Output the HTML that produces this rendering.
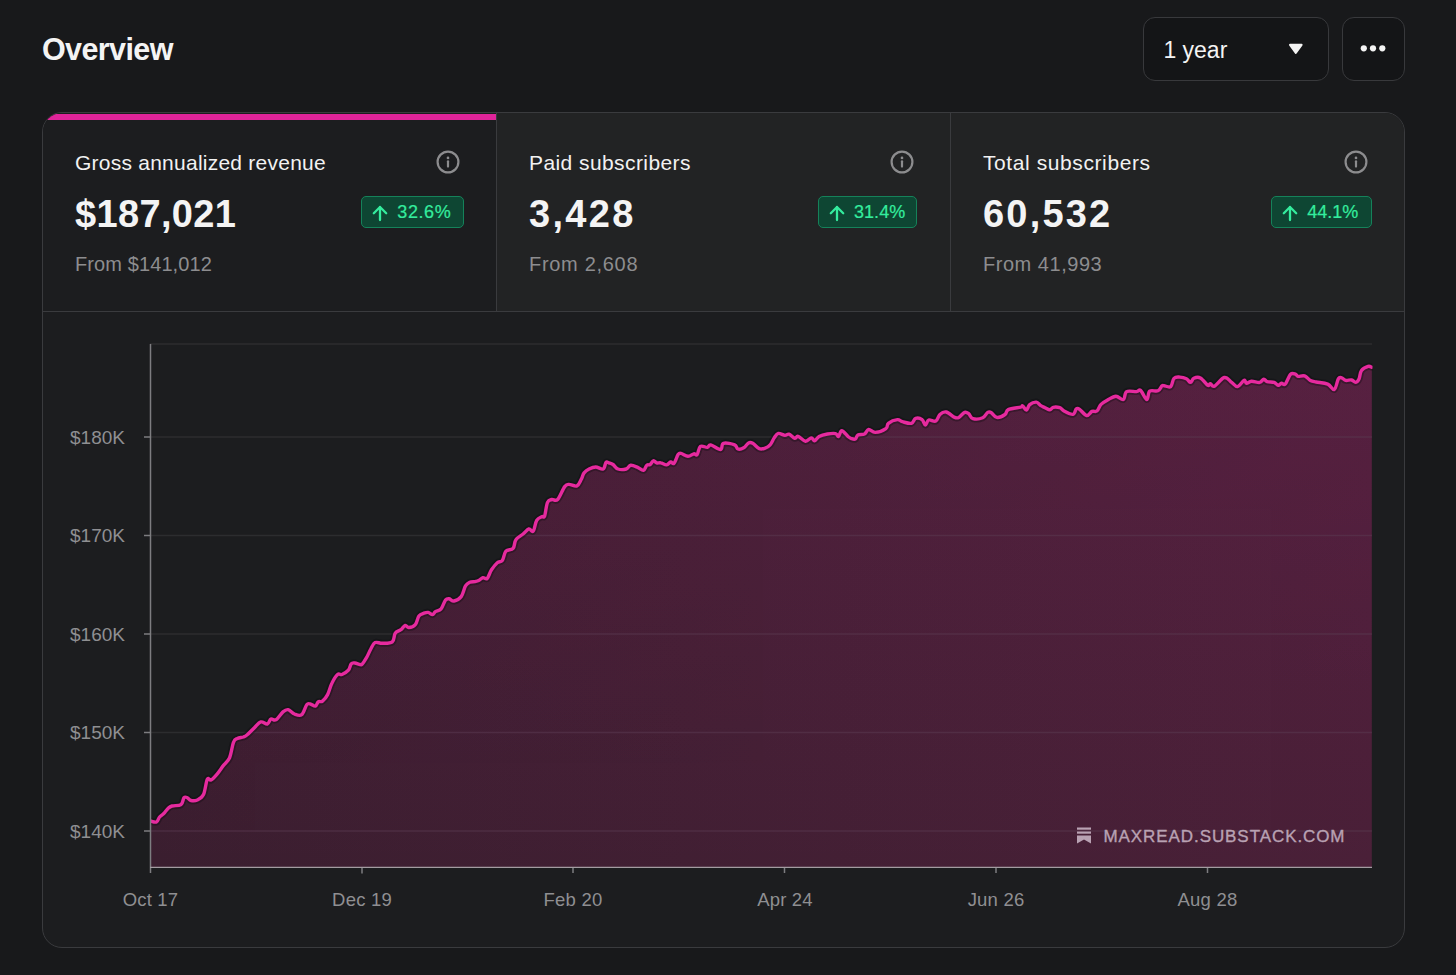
<!DOCTYPE html>
<html><head><meta charset="utf-8">
<style>
*{box-sizing:border-box;margin:0;padding:0}
html,body{width:1456px;height:975px;overflow:hidden;background:#18191b}
body{font-family:"Liberation Sans",sans-serif;color:#f2f2f2;position:relative}
.abs{position:absolute}
.title{left:42px;top:31px;font-size:30.5px;font-weight:700;color:#f4f4f4;line-height:36px;white-space:nowrap;letter-spacing:-0.6px}
.btn{border:1.5px solid #38393c;border-radius:12px;background:#141517}
.dd{left:1143px;top:17px;width:186px;height:64px}
.dd .lbl{position:absolute;left:19.4px;top:18px;font-size:23px;line-height:28px;color:#f4f4f4}
.more{left:1342px;top:17px;width:63px;height:64px}
.card{left:42px;top:112px;width:1363px;height:836px;border:1px solid #3a3b3e;border-radius:20px;background:#1c1d1f;overflow:hidden}
.tile{position:absolute;top:0;height:199px;background:#222324;border-bottom:1px solid #3a3b3e}
.t1{left:0;width:454px;background:#1c1d1f;border-right:1px solid #3a3b3e}
.t2{left:454px;width:454px;border-right:1px solid #3a3b3e}
.t3{left:908px;width:453px}
.bar{position:absolute;left:0;top:1px;width:453px;height:6px;background:#e0249a}
.tt{position:absolute;left:32px;top:38px;font-size:21px;line-height:24px;color:#f2f2f2;white-space:nowrap;letter-spacing:0.2px}
.num{position:absolute;left:32px;top:78.5px;font-size:38px;font-weight:700;line-height:44px;color:#f4f4f4;white-space:nowrap;letter-spacing:0.3px}
.from{position:absolute;left:32px;top:139px;font-size:20px;line-height:24px;color:#8d8d8f;white-space:nowrap;letter-spacing:0.1px}
.badge{position:absolute;top:83.3px;height:31.8px;border:1.5px solid #15825a;background:#0e4633;border-radius:5px;color:#34ec9e;font-size:18px;line-height:29px;white-space:nowrap}
.badge svg{position:absolute;left:9px;top:6.5px}
.badge span{position:absolute;left:35px;top:1px;-webkit-text-stroke:0.2px #34ec9e}
.info{position:absolute;top:36.5px}
</style></head><body>
<div class="abs title">Overview</div>
<div class="abs btn dd"><span class="lbl">1 year</span>
<svg class="abs" style="left:144px;top:24.5px" width="16" height="14" viewBox="0 0 16 14"><path d="M2 1.8 L13.6 1.8 L7.8 10 Z" fill="#f4f4f4" stroke="#f4f4f4" stroke-width="2" stroke-linejoin="round"/></svg>
</div>
<div class="abs btn more">
<svg class="abs" style="left:17px;top:26px" width="28" height="10" viewBox="0 0 28 10"><circle cx="3.8" cy="4.3" r="3.1" fill="#f4f4f4"/><circle cx="13" cy="4.3" r="3.1" fill="#f4f4f4"/><circle cx="22.3" cy="4.3" r="3.1" fill="#f4f4f4"/></svg>
</div>
<div class="abs card">
  <div class="tile t1"><div class="bar"></div>
    <div class="tt" style="letter-spacing:0.24px">Gross annualized revenue</div>
    <svg class="info" style="left:393px" width="24" height="24" viewBox="0 0 24 24"><circle cx="12" cy="12" r="10.4" fill="none" stroke="#8c8c8e" stroke-width="2.2"/><line x1="12" y1="11.3" x2="12" y2="16.6" stroke="#8c8c8e" stroke-width="2.2" stroke-linecap="round"/><circle cx="12" cy="7.9" r="1.35" fill="#8c8c8e"/></svg>
    <div class="num" style="letter-spacing:0.35px">$187,021</div>
    <div class="badge" style="left:318.3px;width:102.3px"><svg width="18" height="18" viewBox="0 0 18 18"><path d="M9 16 V3 M2.8 9.2 L9 3 L15.2 9.2" fill="none" stroke="#34ec9e" stroke-width="2.3" stroke-linecap="round" stroke-linejoin="round"/></svg><span style="letter-spacing:0.6px">32.6%</span></div>
    <div class="from" style="letter-spacing:0.1px">From $141,012</div>
  </div>
  <div class="tile t2">
    <div class="tt" style="letter-spacing:0.42px">Paid subscribers</div>
    <svg class="info" style="left:393px" width="24" height="24" viewBox="0 0 24 24"><circle cx="12" cy="12" r="10.4" fill="none" stroke="#8c8c8e" stroke-width="2.2"/><line x1="12" y1="11.3" x2="12" y2="16.6" stroke="#8c8c8e" stroke-width="2.2" stroke-linecap="round"/><circle cx="12" cy="7.9" r="1.35" fill="#8c8c8e"/></svg>
    <div class="num" style="letter-spacing:2.3px">3,428</div>
    <div class="badge" style="left:320.9px;width:99.3px"><svg width="18" height="18" viewBox="0 0 18 18"><path d="M9 16 V3 M2.8 9.2 L9 3 L15.2 9.2" fill="none" stroke="#34ec9e" stroke-width="2.3" stroke-linecap="round" stroke-linejoin="round"/></svg><span style="letter-spacing:0.1px">31.4%</span></div>
    <div class="from" style="letter-spacing:0.7px">From 2,608</div>
  </div>
  <div class="tile t3">
    <div class="tt" style="letter-spacing:0.59px">Total subscribers</div>
    <svg class="info" style="left:393px" width="24" height="24" viewBox="0 0 24 24"><circle cx="12" cy="12" r="10.4" fill="none" stroke="#8c8c8e" stroke-width="2.2"/><line x1="12" y1="11.3" x2="12" y2="16.6" stroke="#8c8c8e" stroke-width="2.2" stroke-linecap="round"/><circle cx="12" cy="7.9" r="1.35" fill="#8c8c8e"/></svg>
    <div class="num" style="letter-spacing:2.2px">60,532</div>
    <div class="badge" style="left:320.3px;width:100.6px"><svg width="18" height="18" viewBox="0 0 18 18"><path d="M9 16 V3 M2.8 9.2 L9 3 L15.2 9.2" fill="none" stroke="#34ec9e" stroke-width="2.3" stroke-linecap="round" stroke-linejoin="round"/></svg><span>44.1%</span></div>
    <div class="from" style="letter-spacing:0.53px">From 41,993</div>
  </div>
</div>
<svg class="abs" style="left:0;top:0" width="1456" height="975" viewBox="0 0 1456 975">
  <defs>
    <linearGradient id="fg" x1="150" y1="0" x2="1372" y2="0" gradientUnits="userSpaceOnUse">
      <stop offset="0" stop-color="#3a1e2f"/>
      <stop offset="1" stop-color="#4a2038"/>
    </linearGradient>
    <linearGradient id="fv" x1="0" y1="360" x2="0" y2="867" gradientUnits="userSpaceOnUse">
      <stop offset="0" stop-color="#e0249a" stop-opacity="0.09"/>
      <stop offset="1" stop-color="#e0249a" stop-opacity="0"/>
    </linearGradient>
  </defs>
  <g stroke="#2c2d2f" stroke-width="1.5">
    <line x1="150" y1="344" x2="1372" y2="344"/>
    <line x1="150" y1="437" x2="1372" y2="437"/>
    <line x1="150" y1="535.5" x2="1372" y2="535.5"/>
    <line x1="150" y1="634" x2="1372" y2="634"/>
    <line x1="150" y1="732.5" x2="1372" y2="732.5"/>
    <line x1="150" y1="831" x2="1372" y2="831"/>
  </g>
  <path d="M150.5 821.0 C151.6 821.2 154.9 822.7 156.5 822.0 C158.1 821.3 158.4 818.4 159.6 817.0 C160.8 815.6 162.0 815.3 163.5 813.8 C165.0 812.3 166.5 809.9 168.0 808.5 C169.5 807.1 169.7 806.7 172.0 806.0 C174.3 805.3 178.9 806.1 181.0 804.6 C183.1 803.1 182.9 798.9 184.0 797.7 C185.1 796.5 186.1 797.2 187.3 797.7 C188.5 798.2 189.2 800.1 191.0 800.5 C192.8 800.9 195.1 801.0 197.3 800.0 C199.5 799.0 201.8 798.2 203.5 794.6 C205.2 791.0 206.0 781.8 207.3 779.2 C208.6 776.6 209.2 780.9 211.0 780.0 C212.8 779.1 215.1 776.4 217.3 773.8 C219.5 771.2 221.3 768.2 223.5 765.4 C225.7 762.6 227.8 761.7 229.6 757.7 C231.3 753.7 232.2 745.7 233.5 742.3 C234.8 738.9 235.6 739.4 237.3 738.5 C239.1 737.6 241.8 737.6 243.5 737.0 C245.2 736.4 245.3 736.4 247.2 734.8 C249.1 733.2 252.0 730.0 254.4 727.7 C256.8 725.4 258.5 722.5 260.8 721.9 C263.1 721.3 265.5 724.5 267.3 724.0 C269.1 723.5 269.4 719.7 270.9 719.0 C272.4 718.3 273.8 721.0 275.9 719.8 C278.0 718.6 280.9 713.7 283.0 711.9 C285.1 710.1 286.1 709.3 288.1 709.7 C290.1 710.1 292.1 713.1 294.5 714.0 C296.9 714.9 299.6 716.3 301.7 714.7 C303.8 713.1 305.2 706.6 306.7 704.7 C308.2 702.8 308.8 703.8 310.3 704.0 C311.8 704.2 314.0 706.5 315.4 706.1 C316.8 705.7 317.0 702.7 318.2 701.8 C319.4 700.9 320.9 702.4 322.5 701.1 C324.1 699.8 326.0 697.7 327.6 694.6 C329.2 691.5 330.1 686.7 331.9 683.2 C333.6 679.7 335.9 676.0 337.6 674.5 C339.4 673.0 340.0 675.3 341.9 674.5 C343.8 673.7 346.8 672.1 348.4 670.2 C350.0 668.3 350.1 665.1 351.2 663.8 C352.3 662.5 353.3 662.9 354.8 663.0 C356.3 663.1 358.7 664.3 360.0 664.5 C361.3 664.7 361.1 665.3 362.2 664.1 C363.3 662.9 365.0 660.3 366.5 657.7 C368.0 655.1 369.3 651.6 370.8 649.0 C372.3 646.4 373.1 643.6 375.1 642.6 C377.1 641.6 379.3 643.4 382.3 643.3 C385.3 643.2 390.0 643.7 392.3 641.9 C394.6 640.1 393.7 635.3 395.2 633.2 C396.7 631.1 399.1 631.1 400.9 629.7 C402.6 628.3 403.8 625.8 405.2 625.4 C406.6 625.0 407.0 627.6 408.8 627.5 C410.6 627.4 413.5 626.6 415.3 624.6 C417.1 622.6 417.4 618.0 418.9 616.0 C420.4 614.0 422.3 613.8 423.9 613.2 C425.5 612.6 426.7 612.2 428.2 612.4 C429.7 612.6 431.2 614.7 432.5 614.6 C433.8 614.5 433.9 612.7 435.4 611.7 C436.9 610.7 439.4 610.8 441.1 608.8 C442.9 606.8 444.0 602.0 445.4 600.2 C446.8 598.5 447.5 598.7 449.0 598.8 C450.5 598.9 451.9 601.4 454.0 601.0 C456.1 600.6 459.2 599.2 461.2 596.6 C463.2 594.0 464.0 588.4 465.5 585.9 C467.0 583.4 468.1 583.1 469.8 582.3 C471.5 581.5 473.5 581.9 475.0 581.6 C476.5 581.3 477.2 581.3 478.6 580.6 C480.0 579.9 481.4 578.1 482.9 577.7 C484.4 577.3 485.7 579.8 487.2 578.4 C488.7 577.0 489.7 572.5 491.5 569.8 C493.3 567.1 495.4 564.3 497.3 562.7 C499.2 561.1 500.8 562.5 502.3 560.5 C503.8 558.5 504.0 553.3 505.9 551.2 C507.8 549.1 511.4 550.3 513.1 548.3 C514.9 546.3 514.1 542.2 515.9 539.7 C517.6 537.2 520.8 535.9 523.1 534.0 C525.4 532.1 527.0 529.4 528.8 528.9 C530.6 528.4 531.8 532.6 533.2 531.1 C534.6 529.6 535.2 522.8 536.7 520.3 C538.2 517.8 540.4 517.5 541.8 516.7 C543.2 515.9 543.6 518.5 544.6 516.0 C545.6 513.5 546.2 505.3 547.5 502.4 C548.8 499.5 550.0 500.0 551.8 499.5 C553.6 499.0 555.3 501.8 557.6 499.5 C559.9 497.2 562.7 489.2 564.7 486.6 C566.7 484.0 566.9 484.5 569.0 484.4 C571.1 484.3 574.8 486.8 576.9 485.9 C579.0 485.0 579.9 481.7 581.2 479.4 C582.5 477.1 582.7 474.7 584.1 472.9 C585.5 471.1 587.1 470.0 589.1 469.0 C591.1 468.0 593.2 467.0 595.7 467.0 C598.2 467.0 601.3 469.8 603.1 469.0 C604.9 468.2 605.0 463.5 606.0 462.4 C607.0 461.3 607.7 462.5 608.9 462.9 C610.1 463.3 611.4 463.4 613.0 464.5 C614.6 465.6 615.7 468.2 618.0 469.0 C620.3 469.8 624.0 469.6 626.2 469.0 C628.4 468.4 628.7 465.6 630.7 465.3 C632.7 465.0 635.5 466.5 637.7 467.4 C639.9 468.3 641.9 470.7 643.5 470.3 C645.1 469.9 645.6 466.3 646.8 465.3 C648.0 464.3 648.9 465.3 650.1 464.5 C651.3 463.7 652.2 461.1 653.4 460.8 C654.6 460.5 655.4 462.5 656.7 462.9 C658.0 463.3 659.1 462.5 660.8 462.9 C662.5 463.2 664.9 465.1 666.6 464.9 C668.3 464.7 669.4 462.3 670.7 462.0 C672.0 461.7 672.7 464.6 674.0 463.3 C675.3 462.0 676.9 456.3 678.1 454.6 C679.3 452.9 679.3 453.1 681.0 453.4 C682.7 453.7 685.8 456.2 688.0 456.3 C690.2 456.4 692.2 454.1 693.8 453.8 C695.4 453.5 695.9 455.9 697.1 454.6 C698.3 453.3 698.6 447.7 700.4 446.4 C702.2 445.1 705.6 447.7 707.4 447.4 C709.2 447.1 708.4 444.5 710.7 444.9 C713.0 445.3 718.4 449.8 720.6 449.5 C722.8 449.2 721.0 444.1 723.5 443.3 C726.0 442.5 732.1 443.9 734.6 444.9 C737.1 445.9 736.3 448.5 737.9 449.0 C739.5 449.5 741.8 448.9 743.7 447.8 C745.6 446.7 747.0 443.7 748.6 442.9 C750.2 442.1 750.9 442.3 752.8 443.3 C754.7 444.3 757.1 447.7 759.3 448.6 C761.5 449.5 763.2 448.8 765.1 448.2 C767.0 447.6 768.5 446.7 770.1 444.9 C771.7 443.1 772.8 439.9 774.2 437.9 C775.6 435.9 776.4 433.8 778.3 433.4 C780.2 433.0 783.0 435.3 784.9 435.4 C786.8 435.5 787.3 433.7 789.0 434.2 C790.7 434.7 793.2 437.9 794.8 438.3 C796.4 438.7 796.2 435.8 798.1 436.3 C800.0 436.8 803.2 440.9 805.5 441.2 C807.8 441.5 809.7 438.0 811.3 437.9 C812.9 437.8 813.2 441.0 814.6 440.8 C816.0 440.6 816.9 437.7 819.1 436.5 C821.3 435.3 824.5 434.5 827.4 434.0 C830.3 433.5 833.7 433.2 835.6 433.6 C837.5 434.0 837.4 437.0 838.5 436.5 C839.6 436.0 840.1 430.7 841.8 430.7 C843.5 430.7 846.3 435.1 848.0 436.5 C849.7 437.9 850.0 438.2 851.3 438.6 C852.6 439.0 854.2 439.6 855.4 439.0 C856.6 438.4 856.3 435.8 857.9 434.9 C859.5 434.0 862.6 434.9 864.5 434.0 C866.4 433.1 866.7 429.8 868.6 429.5 C870.5 429.2 872.2 432.5 875.2 432.4 C878.2 432.3 883.6 430.3 885.9 428.7 C888.2 427.1 886.4 424.9 888.4 423.3 C890.4 421.7 894.9 419.9 897.4 419.6 C899.9 419.3 899.9 421.1 902.4 421.7 C904.9 422.3 909.1 423.9 911.4 423.3 C913.7 422.7 913.7 419.0 915.6 418.4 C917.5 417.8 920.4 418.4 922.1 419.6 C923.8 420.8 924.2 424.9 925.4 425.0 C926.6 425.1 926.9 420.7 928.7 420.0 C930.5 419.3 933.8 422.1 935.8 421.1 C937.8 420.1 938.1 416.1 939.9 414.5 C941.7 412.9 943.5 411.5 946.1 412.0 C948.7 412.5 952.5 416.5 954.7 417.4 C956.9 418.3 957.1 418.3 958.8 417.4 C960.5 416.5 962.9 413.0 964.6 412.4 C966.3 411.8 967.2 412.6 968.7 413.7 C970.2 414.8 970.4 417.9 972.9 418.6 C975.4 419.3 980.1 418.9 982.7 417.8 C985.3 416.7 986.2 413.3 987.7 412.4 C989.2 411.5 989.4 411.5 991.0 412.4 C992.6 413.3 994.3 417.0 996.8 417.4 C999.2 417.8 1003.0 415.9 1005.0 414.5 C1007.0 413.1 1005.6 410.9 1008.3 409.6 C1011.0 408.3 1018.2 407.7 1020.7 407.1 C1023.2 406.5 1021.7 405.4 1022.7 405.9 C1023.7 406.4 1025.2 410.2 1026.4 410.0 C1027.6 409.8 1028.0 406.0 1029.7 404.6 C1031.4 403.2 1034.4 402.0 1036.3 402.1 C1038.2 402.2 1038.9 404.4 1040.4 405.4 C1041.9 406.4 1043.3 406.9 1045.0 407.7 C1046.7 408.5 1048.5 409.9 1049.9 409.8 C1051.3 409.7 1051.5 407.7 1053.2 407.3 C1054.9 406.9 1057.9 407.1 1059.8 407.7 C1061.7 408.3 1061.7 409.8 1064.0 411.0 C1066.3 412.2 1070.8 414.7 1073.0 414.3 C1075.2 413.9 1075.1 409.8 1076.3 408.9 C1077.5 408.0 1077.8 408.1 1079.6 409.3 C1081.4 410.5 1084.4 415.1 1086.6 415.5 C1088.8 415.9 1090.2 412.2 1092.0 411.4 C1093.8 410.6 1095.3 412.2 1096.9 411.0 C1098.5 409.8 1099.1 406.3 1101.0 404.4 C1102.9 402.5 1105.0 401.3 1107.6 399.9 C1110.2 398.5 1113.2 396.3 1115.9 396.2 C1118.6 396.1 1121.4 400.3 1123.3 399.5 C1125.2 398.7 1124.3 393.0 1126.6 391.6 C1128.9 390.2 1134.0 391.8 1136.5 391.6 C1139.0 391.4 1138.8 389.0 1140.6 390.4 C1142.4 391.8 1145.2 399.4 1146.8 399.5 C1148.4 399.6 1147.8 392.7 1149.7 391.2 C1151.6 389.7 1155.7 391.7 1157.9 390.8 C1160.1 389.9 1160.9 386.8 1162.0 385.9 C1163.1 385.0 1162.6 385.6 1164.1 385.7 C1165.6 385.8 1169.0 387.9 1170.7 386.6 C1172.4 385.3 1172.4 380.0 1174.0 378.3 C1175.6 376.6 1177.6 377.0 1179.8 377.1 C1182.0 377.2 1184.5 377.8 1186.4 378.7 C1188.3 379.6 1189.2 382.5 1190.5 382.4 C1191.8 382.3 1192.1 379.1 1193.8 378.3 C1195.5 377.5 1198.0 376.7 1200.4 377.9 C1202.9 379.1 1206.1 384.3 1207.8 385.3 C1209.5 386.3 1209.1 383.5 1210.3 383.7 C1211.5 383.9 1212.0 387.3 1214.4 386.2 C1216.9 385.1 1221.3 378.2 1224.3 377.5 C1227.3 376.8 1229.4 380.8 1231.7 382.4 C1234.0 384.0 1235.3 387.0 1237.5 386.6 C1239.7 386.2 1242.5 381.0 1244.1 380.4 C1245.7 379.8 1245.2 383.2 1246.5 383.3 C1247.8 383.4 1249.2 381.4 1251.5 381.2 C1253.8 381.0 1257.5 382.8 1259.7 382.4 C1261.9 382.0 1262.5 379.2 1263.8 379.1 C1265.1 379.0 1265.3 381.0 1267.1 381.6 C1268.9 382.2 1272.2 381.8 1274.1 382.4 C1276.0 383.0 1276.9 385.1 1278.2 385.3 C1279.5 385.5 1280.3 383.5 1281.5 383.3 C1282.7 383.1 1283.6 385.7 1285.2 384.1 C1286.8 382.5 1288.8 375.9 1290.6 374.2 C1292.4 372.5 1294.2 373.8 1295.5 374.2 C1296.8 374.6 1296.4 376.0 1298.0 376.3 C1299.6 376.6 1302.4 375.2 1304.6 375.9 C1306.8 376.6 1308.4 379.3 1310.4 380.4 C1312.4 381.5 1313.2 381.4 1316.2 382.0 C1319.2 382.6 1324.5 382.8 1327.7 384.1 C1330.9 385.4 1332.4 390.4 1334.3 389.5 C1336.2 388.6 1337.1 380.7 1338.4 378.7 C1339.7 376.7 1340.4 377.6 1341.7 377.9 C1343.0 378.2 1344.1 380.0 1345.8 380.4 C1347.5 380.8 1349.9 379.6 1351.6 380.0 C1353.3 380.4 1354.4 382.6 1355.7 382.4 C1357.0 382.2 1358.0 381.2 1359.0 379.1 C1360.0 377.0 1359.9 372.7 1361.5 370.5 C1363.1 368.3 1366.3 367.0 1368.1 366.4 C1369.9 365.8 1371.2 367.1 1371.8 367.2 L1371.8 867 L150.5 867 Z" fill="url(#fg)"/>
  <path d="M150.5 821.0 C151.6 821.2 154.9 822.7 156.5 822.0 C158.1 821.3 158.4 818.4 159.6 817.0 C160.8 815.6 162.0 815.3 163.5 813.8 C165.0 812.3 166.5 809.9 168.0 808.5 C169.5 807.1 169.7 806.7 172.0 806.0 C174.3 805.3 178.9 806.1 181.0 804.6 C183.1 803.1 182.9 798.9 184.0 797.7 C185.1 796.5 186.1 797.2 187.3 797.7 C188.5 798.2 189.2 800.1 191.0 800.5 C192.8 800.9 195.1 801.0 197.3 800.0 C199.5 799.0 201.8 798.2 203.5 794.6 C205.2 791.0 206.0 781.8 207.3 779.2 C208.6 776.6 209.2 780.9 211.0 780.0 C212.8 779.1 215.1 776.4 217.3 773.8 C219.5 771.2 221.3 768.2 223.5 765.4 C225.7 762.6 227.8 761.7 229.6 757.7 C231.3 753.7 232.2 745.7 233.5 742.3 C234.8 738.9 235.6 739.4 237.3 738.5 C239.1 737.6 241.8 737.6 243.5 737.0 C245.2 736.4 245.3 736.4 247.2 734.8 C249.1 733.2 252.0 730.0 254.4 727.7 C256.8 725.4 258.5 722.5 260.8 721.9 C263.1 721.3 265.5 724.5 267.3 724.0 C269.1 723.5 269.4 719.7 270.9 719.0 C272.4 718.3 273.8 721.0 275.9 719.8 C278.0 718.6 280.9 713.7 283.0 711.9 C285.1 710.1 286.1 709.3 288.1 709.7 C290.1 710.1 292.1 713.1 294.5 714.0 C296.9 714.9 299.6 716.3 301.7 714.7 C303.8 713.1 305.2 706.6 306.7 704.7 C308.2 702.8 308.8 703.8 310.3 704.0 C311.8 704.2 314.0 706.5 315.4 706.1 C316.8 705.7 317.0 702.7 318.2 701.8 C319.4 700.9 320.9 702.4 322.5 701.1 C324.1 699.8 326.0 697.7 327.6 694.6 C329.2 691.5 330.1 686.7 331.9 683.2 C333.6 679.7 335.9 676.0 337.6 674.5 C339.4 673.0 340.0 675.3 341.9 674.5 C343.8 673.7 346.8 672.1 348.4 670.2 C350.0 668.3 350.1 665.1 351.2 663.8 C352.3 662.5 353.3 662.9 354.8 663.0 C356.3 663.1 358.7 664.3 360.0 664.5 C361.3 664.7 361.1 665.3 362.2 664.1 C363.3 662.9 365.0 660.3 366.5 657.7 C368.0 655.1 369.3 651.6 370.8 649.0 C372.3 646.4 373.1 643.6 375.1 642.6 C377.1 641.6 379.3 643.4 382.3 643.3 C385.3 643.2 390.0 643.7 392.3 641.9 C394.6 640.1 393.7 635.3 395.2 633.2 C396.7 631.1 399.1 631.1 400.9 629.7 C402.6 628.3 403.8 625.8 405.2 625.4 C406.6 625.0 407.0 627.6 408.8 627.5 C410.6 627.4 413.5 626.6 415.3 624.6 C417.1 622.6 417.4 618.0 418.9 616.0 C420.4 614.0 422.3 613.8 423.9 613.2 C425.5 612.6 426.7 612.2 428.2 612.4 C429.7 612.6 431.2 614.7 432.5 614.6 C433.8 614.5 433.9 612.7 435.4 611.7 C436.9 610.7 439.4 610.8 441.1 608.8 C442.9 606.8 444.0 602.0 445.4 600.2 C446.8 598.5 447.5 598.7 449.0 598.8 C450.5 598.9 451.9 601.4 454.0 601.0 C456.1 600.6 459.2 599.2 461.2 596.6 C463.2 594.0 464.0 588.4 465.5 585.9 C467.0 583.4 468.1 583.1 469.8 582.3 C471.5 581.5 473.5 581.9 475.0 581.6 C476.5 581.3 477.2 581.3 478.6 580.6 C480.0 579.9 481.4 578.1 482.9 577.7 C484.4 577.3 485.7 579.8 487.2 578.4 C488.7 577.0 489.7 572.5 491.5 569.8 C493.3 567.1 495.4 564.3 497.3 562.7 C499.2 561.1 500.8 562.5 502.3 560.5 C503.8 558.5 504.0 553.3 505.9 551.2 C507.8 549.1 511.4 550.3 513.1 548.3 C514.9 546.3 514.1 542.2 515.9 539.7 C517.6 537.2 520.8 535.9 523.1 534.0 C525.4 532.1 527.0 529.4 528.8 528.9 C530.6 528.4 531.8 532.6 533.2 531.1 C534.6 529.6 535.2 522.8 536.7 520.3 C538.2 517.8 540.4 517.5 541.8 516.7 C543.2 515.9 543.6 518.5 544.6 516.0 C545.6 513.5 546.2 505.3 547.5 502.4 C548.8 499.5 550.0 500.0 551.8 499.5 C553.6 499.0 555.3 501.8 557.6 499.5 C559.9 497.2 562.7 489.2 564.7 486.6 C566.7 484.0 566.9 484.5 569.0 484.4 C571.1 484.3 574.8 486.8 576.9 485.9 C579.0 485.0 579.9 481.7 581.2 479.4 C582.5 477.1 582.7 474.7 584.1 472.9 C585.5 471.1 587.1 470.0 589.1 469.0 C591.1 468.0 593.2 467.0 595.7 467.0 C598.2 467.0 601.3 469.8 603.1 469.0 C604.9 468.2 605.0 463.5 606.0 462.4 C607.0 461.3 607.7 462.5 608.9 462.9 C610.1 463.3 611.4 463.4 613.0 464.5 C614.6 465.6 615.7 468.2 618.0 469.0 C620.3 469.8 624.0 469.6 626.2 469.0 C628.4 468.4 628.7 465.6 630.7 465.3 C632.7 465.0 635.5 466.5 637.7 467.4 C639.9 468.3 641.9 470.7 643.5 470.3 C645.1 469.9 645.6 466.3 646.8 465.3 C648.0 464.3 648.9 465.3 650.1 464.5 C651.3 463.7 652.2 461.1 653.4 460.8 C654.6 460.5 655.4 462.5 656.7 462.9 C658.0 463.3 659.1 462.5 660.8 462.9 C662.5 463.2 664.9 465.1 666.6 464.9 C668.3 464.7 669.4 462.3 670.7 462.0 C672.0 461.7 672.7 464.6 674.0 463.3 C675.3 462.0 676.9 456.3 678.1 454.6 C679.3 452.9 679.3 453.1 681.0 453.4 C682.7 453.7 685.8 456.2 688.0 456.3 C690.2 456.4 692.2 454.1 693.8 453.8 C695.4 453.5 695.9 455.9 697.1 454.6 C698.3 453.3 698.6 447.7 700.4 446.4 C702.2 445.1 705.6 447.7 707.4 447.4 C709.2 447.1 708.4 444.5 710.7 444.9 C713.0 445.3 718.4 449.8 720.6 449.5 C722.8 449.2 721.0 444.1 723.5 443.3 C726.0 442.5 732.1 443.9 734.6 444.9 C737.1 445.9 736.3 448.5 737.9 449.0 C739.5 449.5 741.8 448.9 743.7 447.8 C745.6 446.7 747.0 443.7 748.6 442.9 C750.2 442.1 750.9 442.3 752.8 443.3 C754.7 444.3 757.1 447.7 759.3 448.6 C761.5 449.5 763.2 448.8 765.1 448.2 C767.0 447.6 768.5 446.7 770.1 444.9 C771.7 443.1 772.8 439.9 774.2 437.9 C775.6 435.9 776.4 433.8 778.3 433.4 C780.2 433.0 783.0 435.3 784.9 435.4 C786.8 435.5 787.3 433.7 789.0 434.2 C790.7 434.7 793.2 437.9 794.8 438.3 C796.4 438.7 796.2 435.8 798.1 436.3 C800.0 436.8 803.2 440.9 805.5 441.2 C807.8 441.5 809.7 438.0 811.3 437.9 C812.9 437.8 813.2 441.0 814.6 440.8 C816.0 440.6 816.9 437.7 819.1 436.5 C821.3 435.3 824.5 434.5 827.4 434.0 C830.3 433.5 833.7 433.2 835.6 433.6 C837.5 434.0 837.4 437.0 838.5 436.5 C839.6 436.0 840.1 430.7 841.8 430.7 C843.5 430.7 846.3 435.1 848.0 436.5 C849.7 437.9 850.0 438.2 851.3 438.6 C852.6 439.0 854.2 439.6 855.4 439.0 C856.6 438.4 856.3 435.8 857.9 434.9 C859.5 434.0 862.6 434.9 864.5 434.0 C866.4 433.1 866.7 429.8 868.6 429.5 C870.5 429.2 872.2 432.5 875.2 432.4 C878.2 432.3 883.6 430.3 885.9 428.7 C888.2 427.1 886.4 424.9 888.4 423.3 C890.4 421.7 894.9 419.9 897.4 419.6 C899.9 419.3 899.9 421.1 902.4 421.7 C904.9 422.3 909.1 423.9 911.4 423.3 C913.7 422.7 913.7 419.0 915.6 418.4 C917.5 417.8 920.4 418.4 922.1 419.6 C923.8 420.8 924.2 424.9 925.4 425.0 C926.6 425.1 926.9 420.7 928.7 420.0 C930.5 419.3 933.8 422.1 935.8 421.1 C937.8 420.1 938.1 416.1 939.9 414.5 C941.7 412.9 943.5 411.5 946.1 412.0 C948.7 412.5 952.5 416.5 954.7 417.4 C956.9 418.3 957.1 418.3 958.8 417.4 C960.5 416.5 962.9 413.0 964.6 412.4 C966.3 411.8 967.2 412.6 968.7 413.7 C970.2 414.8 970.4 417.9 972.9 418.6 C975.4 419.3 980.1 418.9 982.7 417.8 C985.3 416.7 986.2 413.3 987.7 412.4 C989.2 411.5 989.4 411.5 991.0 412.4 C992.6 413.3 994.3 417.0 996.8 417.4 C999.2 417.8 1003.0 415.9 1005.0 414.5 C1007.0 413.1 1005.6 410.9 1008.3 409.6 C1011.0 408.3 1018.2 407.7 1020.7 407.1 C1023.2 406.5 1021.7 405.4 1022.7 405.9 C1023.7 406.4 1025.2 410.2 1026.4 410.0 C1027.6 409.8 1028.0 406.0 1029.7 404.6 C1031.4 403.2 1034.4 402.0 1036.3 402.1 C1038.2 402.2 1038.9 404.4 1040.4 405.4 C1041.9 406.4 1043.3 406.9 1045.0 407.7 C1046.7 408.5 1048.5 409.9 1049.9 409.8 C1051.3 409.7 1051.5 407.7 1053.2 407.3 C1054.9 406.9 1057.9 407.1 1059.8 407.7 C1061.7 408.3 1061.7 409.8 1064.0 411.0 C1066.3 412.2 1070.8 414.7 1073.0 414.3 C1075.2 413.9 1075.1 409.8 1076.3 408.9 C1077.5 408.0 1077.8 408.1 1079.6 409.3 C1081.4 410.5 1084.4 415.1 1086.6 415.5 C1088.8 415.9 1090.2 412.2 1092.0 411.4 C1093.8 410.6 1095.3 412.2 1096.9 411.0 C1098.5 409.8 1099.1 406.3 1101.0 404.4 C1102.9 402.5 1105.0 401.3 1107.6 399.9 C1110.2 398.5 1113.2 396.3 1115.9 396.2 C1118.6 396.1 1121.4 400.3 1123.3 399.5 C1125.2 398.7 1124.3 393.0 1126.6 391.6 C1128.9 390.2 1134.0 391.8 1136.5 391.6 C1139.0 391.4 1138.8 389.0 1140.6 390.4 C1142.4 391.8 1145.2 399.4 1146.8 399.5 C1148.4 399.6 1147.8 392.7 1149.7 391.2 C1151.6 389.7 1155.7 391.7 1157.9 390.8 C1160.1 389.9 1160.9 386.8 1162.0 385.9 C1163.1 385.0 1162.6 385.6 1164.1 385.7 C1165.6 385.8 1169.0 387.9 1170.7 386.6 C1172.4 385.3 1172.4 380.0 1174.0 378.3 C1175.6 376.6 1177.6 377.0 1179.8 377.1 C1182.0 377.2 1184.5 377.8 1186.4 378.7 C1188.3 379.6 1189.2 382.5 1190.5 382.4 C1191.8 382.3 1192.1 379.1 1193.8 378.3 C1195.5 377.5 1198.0 376.7 1200.4 377.9 C1202.9 379.1 1206.1 384.3 1207.8 385.3 C1209.5 386.3 1209.1 383.5 1210.3 383.7 C1211.5 383.9 1212.0 387.3 1214.4 386.2 C1216.9 385.1 1221.3 378.2 1224.3 377.5 C1227.3 376.8 1229.4 380.8 1231.7 382.4 C1234.0 384.0 1235.3 387.0 1237.5 386.6 C1239.7 386.2 1242.5 381.0 1244.1 380.4 C1245.7 379.8 1245.2 383.2 1246.5 383.3 C1247.8 383.4 1249.2 381.4 1251.5 381.2 C1253.8 381.0 1257.5 382.8 1259.7 382.4 C1261.9 382.0 1262.5 379.2 1263.8 379.1 C1265.1 379.0 1265.3 381.0 1267.1 381.6 C1268.9 382.2 1272.2 381.8 1274.1 382.4 C1276.0 383.0 1276.9 385.1 1278.2 385.3 C1279.5 385.5 1280.3 383.5 1281.5 383.3 C1282.7 383.1 1283.6 385.7 1285.2 384.1 C1286.8 382.5 1288.8 375.9 1290.6 374.2 C1292.4 372.5 1294.2 373.8 1295.5 374.2 C1296.8 374.6 1296.4 376.0 1298.0 376.3 C1299.6 376.6 1302.4 375.2 1304.6 375.9 C1306.8 376.6 1308.4 379.3 1310.4 380.4 C1312.4 381.5 1313.2 381.4 1316.2 382.0 C1319.2 382.6 1324.5 382.8 1327.7 384.1 C1330.9 385.4 1332.4 390.4 1334.3 389.5 C1336.2 388.6 1337.1 380.7 1338.4 378.7 C1339.7 376.7 1340.4 377.6 1341.7 377.9 C1343.0 378.2 1344.1 380.0 1345.8 380.4 C1347.5 380.8 1349.9 379.6 1351.6 380.0 C1353.3 380.4 1354.4 382.6 1355.7 382.4 C1357.0 382.2 1358.0 381.2 1359.0 379.1 C1360.0 377.0 1359.9 372.7 1361.5 370.5 C1363.1 368.3 1366.3 367.0 1368.1 366.4 C1369.9 365.8 1371.2 367.1 1371.8 367.2 L1371.8 867 L150.5 867 Z" fill="url(#fv)"/>
  <clipPath id="fc"><path d="M150.5 821.0 C151.6 821.2 154.9 822.7 156.5 822.0 C158.1 821.3 158.4 818.4 159.6 817.0 C160.8 815.6 162.0 815.3 163.5 813.8 C165.0 812.3 166.5 809.9 168.0 808.5 C169.5 807.1 169.7 806.7 172.0 806.0 C174.3 805.3 178.9 806.1 181.0 804.6 C183.1 803.1 182.9 798.9 184.0 797.7 C185.1 796.5 186.1 797.2 187.3 797.7 C188.5 798.2 189.2 800.1 191.0 800.5 C192.8 800.9 195.1 801.0 197.3 800.0 C199.5 799.0 201.8 798.2 203.5 794.6 C205.2 791.0 206.0 781.8 207.3 779.2 C208.6 776.6 209.2 780.9 211.0 780.0 C212.8 779.1 215.1 776.4 217.3 773.8 C219.5 771.2 221.3 768.2 223.5 765.4 C225.7 762.6 227.8 761.7 229.6 757.7 C231.3 753.7 232.2 745.7 233.5 742.3 C234.8 738.9 235.6 739.4 237.3 738.5 C239.1 737.6 241.8 737.6 243.5 737.0 C245.2 736.4 245.3 736.4 247.2 734.8 C249.1 733.2 252.0 730.0 254.4 727.7 C256.8 725.4 258.5 722.5 260.8 721.9 C263.1 721.3 265.5 724.5 267.3 724.0 C269.1 723.5 269.4 719.7 270.9 719.0 C272.4 718.3 273.8 721.0 275.9 719.8 C278.0 718.6 280.9 713.7 283.0 711.9 C285.1 710.1 286.1 709.3 288.1 709.7 C290.1 710.1 292.1 713.1 294.5 714.0 C296.9 714.9 299.6 716.3 301.7 714.7 C303.8 713.1 305.2 706.6 306.7 704.7 C308.2 702.8 308.8 703.8 310.3 704.0 C311.8 704.2 314.0 706.5 315.4 706.1 C316.8 705.7 317.0 702.7 318.2 701.8 C319.4 700.9 320.9 702.4 322.5 701.1 C324.1 699.8 326.0 697.7 327.6 694.6 C329.2 691.5 330.1 686.7 331.9 683.2 C333.6 679.7 335.9 676.0 337.6 674.5 C339.4 673.0 340.0 675.3 341.9 674.5 C343.8 673.7 346.8 672.1 348.4 670.2 C350.0 668.3 350.1 665.1 351.2 663.8 C352.3 662.5 353.3 662.9 354.8 663.0 C356.3 663.1 358.7 664.3 360.0 664.5 C361.3 664.7 361.1 665.3 362.2 664.1 C363.3 662.9 365.0 660.3 366.5 657.7 C368.0 655.1 369.3 651.6 370.8 649.0 C372.3 646.4 373.1 643.6 375.1 642.6 C377.1 641.6 379.3 643.4 382.3 643.3 C385.3 643.2 390.0 643.7 392.3 641.9 C394.6 640.1 393.7 635.3 395.2 633.2 C396.7 631.1 399.1 631.1 400.9 629.7 C402.6 628.3 403.8 625.8 405.2 625.4 C406.6 625.0 407.0 627.6 408.8 627.5 C410.6 627.4 413.5 626.6 415.3 624.6 C417.1 622.6 417.4 618.0 418.9 616.0 C420.4 614.0 422.3 613.8 423.9 613.2 C425.5 612.6 426.7 612.2 428.2 612.4 C429.7 612.6 431.2 614.7 432.5 614.6 C433.8 614.5 433.9 612.7 435.4 611.7 C436.9 610.7 439.4 610.8 441.1 608.8 C442.9 606.8 444.0 602.0 445.4 600.2 C446.8 598.5 447.5 598.7 449.0 598.8 C450.5 598.9 451.9 601.4 454.0 601.0 C456.1 600.6 459.2 599.2 461.2 596.6 C463.2 594.0 464.0 588.4 465.5 585.9 C467.0 583.4 468.1 583.1 469.8 582.3 C471.5 581.5 473.5 581.9 475.0 581.6 C476.5 581.3 477.2 581.3 478.6 580.6 C480.0 579.9 481.4 578.1 482.9 577.7 C484.4 577.3 485.7 579.8 487.2 578.4 C488.7 577.0 489.7 572.5 491.5 569.8 C493.3 567.1 495.4 564.3 497.3 562.7 C499.2 561.1 500.8 562.5 502.3 560.5 C503.8 558.5 504.0 553.3 505.9 551.2 C507.8 549.1 511.4 550.3 513.1 548.3 C514.9 546.3 514.1 542.2 515.9 539.7 C517.6 537.2 520.8 535.9 523.1 534.0 C525.4 532.1 527.0 529.4 528.8 528.9 C530.6 528.4 531.8 532.6 533.2 531.1 C534.6 529.6 535.2 522.8 536.7 520.3 C538.2 517.8 540.4 517.5 541.8 516.7 C543.2 515.9 543.6 518.5 544.6 516.0 C545.6 513.5 546.2 505.3 547.5 502.4 C548.8 499.5 550.0 500.0 551.8 499.5 C553.6 499.0 555.3 501.8 557.6 499.5 C559.9 497.2 562.7 489.2 564.7 486.6 C566.7 484.0 566.9 484.5 569.0 484.4 C571.1 484.3 574.8 486.8 576.9 485.9 C579.0 485.0 579.9 481.7 581.2 479.4 C582.5 477.1 582.7 474.7 584.1 472.9 C585.5 471.1 587.1 470.0 589.1 469.0 C591.1 468.0 593.2 467.0 595.7 467.0 C598.2 467.0 601.3 469.8 603.1 469.0 C604.9 468.2 605.0 463.5 606.0 462.4 C607.0 461.3 607.7 462.5 608.9 462.9 C610.1 463.3 611.4 463.4 613.0 464.5 C614.6 465.6 615.7 468.2 618.0 469.0 C620.3 469.8 624.0 469.6 626.2 469.0 C628.4 468.4 628.7 465.6 630.7 465.3 C632.7 465.0 635.5 466.5 637.7 467.4 C639.9 468.3 641.9 470.7 643.5 470.3 C645.1 469.9 645.6 466.3 646.8 465.3 C648.0 464.3 648.9 465.3 650.1 464.5 C651.3 463.7 652.2 461.1 653.4 460.8 C654.6 460.5 655.4 462.5 656.7 462.9 C658.0 463.3 659.1 462.5 660.8 462.9 C662.5 463.2 664.9 465.1 666.6 464.9 C668.3 464.7 669.4 462.3 670.7 462.0 C672.0 461.7 672.7 464.6 674.0 463.3 C675.3 462.0 676.9 456.3 678.1 454.6 C679.3 452.9 679.3 453.1 681.0 453.4 C682.7 453.7 685.8 456.2 688.0 456.3 C690.2 456.4 692.2 454.1 693.8 453.8 C695.4 453.5 695.9 455.9 697.1 454.6 C698.3 453.3 698.6 447.7 700.4 446.4 C702.2 445.1 705.6 447.7 707.4 447.4 C709.2 447.1 708.4 444.5 710.7 444.9 C713.0 445.3 718.4 449.8 720.6 449.5 C722.8 449.2 721.0 444.1 723.5 443.3 C726.0 442.5 732.1 443.9 734.6 444.9 C737.1 445.9 736.3 448.5 737.9 449.0 C739.5 449.5 741.8 448.9 743.7 447.8 C745.6 446.7 747.0 443.7 748.6 442.9 C750.2 442.1 750.9 442.3 752.8 443.3 C754.7 444.3 757.1 447.7 759.3 448.6 C761.5 449.5 763.2 448.8 765.1 448.2 C767.0 447.6 768.5 446.7 770.1 444.9 C771.7 443.1 772.8 439.9 774.2 437.9 C775.6 435.9 776.4 433.8 778.3 433.4 C780.2 433.0 783.0 435.3 784.9 435.4 C786.8 435.5 787.3 433.7 789.0 434.2 C790.7 434.7 793.2 437.9 794.8 438.3 C796.4 438.7 796.2 435.8 798.1 436.3 C800.0 436.8 803.2 440.9 805.5 441.2 C807.8 441.5 809.7 438.0 811.3 437.9 C812.9 437.8 813.2 441.0 814.6 440.8 C816.0 440.6 816.9 437.7 819.1 436.5 C821.3 435.3 824.5 434.5 827.4 434.0 C830.3 433.5 833.7 433.2 835.6 433.6 C837.5 434.0 837.4 437.0 838.5 436.5 C839.6 436.0 840.1 430.7 841.8 430.7 C843.5 430.7 846.3 435.1 848.0 436.5 C849.7 437.9 850.0 438.2 851.3 438.6 C852.6 439.0 854.2 439.6 855.4 439.0 C856.6 438.4 856.3 435.8 857.9 434.9 C859.5 434.0 862.6 434.9 864.5 434.0 C866.4 433.1 866.7 429.8 868.6 429.5 C870.5 429.2 872.2 432.5 875.2 432.4 C878.2 432.3 883.6 430.3 885.9 428.7 C888.2 427.1 886.4 424.9 888.4 423.3 C890.4 421.7 894.9 419.9 897.4 419.6 C899.9 419.3 899.9 421.1 902.4 421.7 C904.9 422.3 909.1 423.9 911.4 423.3 C913.7 422.7 913.7 419.0 915.6 418.4 C917.5 417.8 920.4 418.4 922.1 419.6 C923.8 420.8 924.2 424.9 925.4 425.0 C926.6 425.1 926.9 420.7 928.7 420.0 C930.5 419.3 933.8 422.1 935.8 421.1 C937.8 420.1 938.1 416.1 939.9 414.5 C941.7 412.9 943.5 411.5 946.1 412.0 C948.7 412.5 952.5 416.5 954.7 417.4 C956.9 418.3 957.1 418.3 958.8 417.4 C960.5 416.5 962.9 413.0 964.6 412.4 C966.3 411.8 967.2 412.6 968.7 413.7 C970.2 414.8 970.4 417.9 972.9 418.6 C975.4 419.3 980.1 418.9 982.7 417.8 C985.3 416.7 986.2 413.3 987.7 412.4 C989.2 411.5 989.4 411.5 991.0 412.4 C992.6 413.3 994.3 417.0 996.8 417.4 C999.2 417.8 1003.0 415.9 1005.0 414.5 C1007.0 413.1 1005.6 410.9 1008.3 409.6 C1011.0 408.3 1018.2 407.7 1020.7 407.1 C1023.2 406.5 1021.7 405.4 1022.7 405.9 C1023.7 406.4 1025.2 410.2 1026.4 410.0 C1027.6 409.8 1028.0 406.0 1029.7 404.6 C1031.4 403.2 1034.4 402.0 1036.3 402.1 C1038.2 402.2 1038.9 404.4 1040.4 405.4 C1041.9 406.4 1043.3 406.9 1045.0 407.7 C1046.7 408.5 1048.5 409.9 1049.9 409.8 C1051.3 409.7 1051.5 407.7 1053.2 407.3 C1054.9 406.9 1057.9 407.1 1059.8 407.7 C1061.7 408.3 1061.7 409.8 1064.0 411.0 C1066.3 412.2 1070.8 414.7 1073.0 414.3 C1075.2 413.9 1075.1 409.8 1076.3 408.9 C1077.5 408.0 1077.8 408.1 1079.6 409.3 C1081.4 410.5 1084.4 415.1 1086.6 415.5 C1088.8 415.9 1090.2 412.2 1092.0 411.4 C1093.8 410.6 1095.3 412.2 1096.9 411.0 C1098.5 409.8 1099.1 406.3 1101.0 404.4 C1102.9 402.5 1105.0 401.3 1107.6 399.9 C1110.2 398.5 1113.2 396.3 1115.9 396.2 C1118.6 396.1 1121.4 400.3 1123.3 399.5 C1125.2 398.7 1124.3 393.0 1126.6 391.6 C1128.9 390.2 1134.0 391.8 1136.5 391.6 C1139.0 391.4 1138.8 389.0 1140.6 390.4 C1142.4 391.8 1145.2 399.4 1146.8 399.5 C1148.4 399.6 1147.8 392.7 1149.7 391.2 C1151.6 389.7 1155.7 391.7 1157.9 390.8 C1160.1 389.9 1160.9 386.8 1162.0 385.9 C1163.1 385.0 1162.6 385.6 1164.1 385.7 C1165.6 385.8 1169.0 387.9 1170.7 386.6 C1172.4 385.3 1172.4 380.0 1174.0 378.3 C1175.6 376.6 1177.6 377.0 1179.8 377.1 C1182.0 377.2 1184.5 377.8 1186.4 378.7 C1188.3 379.6 1189.2 382.5 1190.5 382.4 C1191.8 382.3 1192.1 379.1 1193.8 378.3 C1195.5 377.5 1198.0 376.7 1200.4 377.9 C1202.9 379.1 1206.1 384.3 1207.8 385.3 C1209.5 386.3 1209.1 383.5 1210.3 383.7 C1211.5 383.9 1212.0 387.3 1214.4 386.2 C1216.9 385.1 1221.3 378.2 1224.3 377.5 C1227.3 376.8 1229.4 380.8 1231.7 382.4 C1234.0 384.0 1235.3 387.0 1237.5 386.6 C1239.7 386.2 1242.5 381.0 1244.1 380.4 C1245.7 379.8 1245.2 383.2 1246.5 383.3 C1247.8 383.4 1249.2 381.4 1251.5 381.2 C1253.8 381.0 1257.5 382.8 1259.7 382.4 C1261.9 382.0 1262.5 379.2 1263.8 379.1 C1265.1 379.0 1265.3 381.0 1267.1 381.6 C1268.9 382.2 1272.2 381.8 1274.1 382.4 C1276.0 383.0 1276.9 385.1 1278.2 385.3 C1279.5 385.5 1280.3 383.5 1281.5 383.3 C1282.7 383.1 1283.6 385.7 1285.2 384.1 C1286.8 382.5 1288.8 375.9 1290.6 374.2 C1292.4 372.5 1294.2 373.8 1295.5 374.2 C1296.8 374.6 1296.4 376.0 1298.0 376.3 C1299.6 376.6 1302.4 375.2 1304.6 375.9 C1306.8 376.6 1308.4 379.3 1310.4 380.4 C1312.4 381.5 1313.2 381.4 1316.2 382.0 C1319.2 382.6 1324.5 382.8 1327.7 384.1 C1330.9 385.4 1332.4 390.4 1334.3 389.5 C1336.2 388.6 1337.1 380.7 1338.4 378.7 C1339.7 376.7 1340.4 377.6 1341.7 377.9 C1343.0 378.2 1344.1 380.0 1345.8 380.4 C1347.5 380.8 1349.9 379.6 1351.6 380.0 C1353.3 380.4 1354.4 382.6 1355.7 382.4 C1357.0 382.2 1358.0 381.2 1359.0 379.1 C1360.0 377.0 1359.9 372.7 1361.5 370.5 C1363.1 368.3 1366.3 367.0 1368.1 366.4 C1369.9 365.8 1371.2 367.1 1371.8 367.2 L1371.8 867 L150.5 867 Z"/></clipPath>
  <g stroke="#5a3a50" stroke-width="1.5" opacity="0.55" clip-path="url(#fc)">
    <line x1="150" y1="437" x2="1372" y2="437"/>
    <line x1="150" y1="535.5" x2="1372" y2="535.5"/>
    <line x1="150" y1="634" x2="1372" y2="634"/>
    <line x1="150" y1="732.5" x2="1372" y2="732.5"/>
    <line x1="150" y1="831" x2="1372" y2="831"/>
  </g>
  <clipPath id="cc"><rect x="150.5" y="300" width="1222" height="580"/></clipPath>
  <g clip-path="url(#cc)">
  <path d="M150.5 821.0 C151.6 821.2 154.9 822.7 156.5 822.0 C158.1 821.3 158.4 818.4 159.6 817.0 C160.8 815.6 162.0 815.3 163.5 813.8 C165.0 812.3 166.5 809.9 168.0 808.5 C169.5 807.1 169.7 806.7 172.0 806.0 C174.3 805.3 178.9 806.1 181.0 804.6 C183.1 803.1 182.9 798.9 184.0 797.7 C185.1 796.5 186.1 797.2 187.3 797.7 C188.5 798.2 189.2 800.1 191.0 800.5 C192.8 800.9 195.1 801.0 197.3 800.0 C199.5 799.0 201.8 798.2 203.5 794.6 C205.2 791.0 206.0 781.8 207.3 779.2 C208.6 776.6 209.2 780.9 211.0 780.0 C212.8 779.1 215.1 776.4 217.3 773.8 C219.5 771.2 221.3 768.2 223.5 765.4 C225.7 762.6 227.8 761.7 229.6 757.7 C231.3 753.7 232.2 745.7 233.5 742.3 C234.8 738.9 235.6 739.4 237.3 738.5 C239.1 737.6 241.8 737.6 243.5 737.0 C245.2 736.4 245.3 736.4 247.2 734.8 C249.1 733.2 252.0 730.0 254.4 727.7 C256.8 725.4 258.5 722.5 260.8 721.9 C263.1 721.3 265.5 724.5 267.3 724.0 C269.1 723.5 269.4 719.7 270.9 719.0 C272.4 718.3 273.8 721.0 275.9 719.8 C278.0 718.6 280.9 713.7 283.0 711.9 C285.1 710.1 286.1 709.3 288.1 709.7 C290.1 710.1 292.1 713.1 294.5 714.0 C296.9 714.9 299.6 716.3 301.7 714.7 C303.8 713.1 305.2 706.6 306.7 704.7 C308.2 702.8 308.8 703.8 310.3 704.0 C311.8 704.2 314.0 706.5 315.4 706.1 C316.8 705.7 317.0 702.7 318.2 701.8 C319.4 700.9 320.9 702.4 322.5 701.1 C324.1 699.8 326.0 697.7 327.6 694.6 C329.2 691.5 330.1 686.7 331.9 683.2 C333.6 679.7 335.9 676.0 337.6 674.5 C339.4 673.0 340.0 675.3 341.9 674.5 C343.8 673.7 346.8 672.1 348.4 670.2 C350.0 668.3 350.1 665.1 351.2 663.8 C352.3 662.5 353.3 662.9 354.8 663.0 C356.3 663.1 358.7 664.3 360.0 664.5 C361.3 664.7 361.1 665.3 362.2 664.1 C363.3 662.9 365.0 660.3 366.5 657.7 C368.0 655.1 369.3 651.6 370.8 649.0 C372.3 646.4 373.1 643.6 375.1 642.6 C377.1 641.6 379.3 643.4 382.3 643.3 C385.3 643.2 390.0 643.7 392.3 641.9 C394.6 640.1 393.7 635.3 395.2 633.2 C396.7 631.1 399.1 631.1 400.9 629.7 C402.6 628.3 403.8 625.8 405.2 625.4 C406.6 625.0 407.0 627.6 408.8 627.5 C410.6 627.4 413.5 626.6 415.3 624.6 C417.1 622.6 417.4 618.0 418.9 616.0 C420.4 614.0 422.3 613.8 423.9 613.2 C425.5 612.6 426.7 612.2 428.2 612.4 C429.7 612.6 431.2 614.7 432.5 614.6 C433.8 614.5 433.9 612.7 435.4 611.7 C436.9 610.7 439.4 610.8 441.1 608.8 C442.9 606.8 444.0 602.0 445.4 600.2 C446.8 598.5 447.5 598.7 449.0 598.8 C450.5 598.9 451.9 601.4 454.0 601.0 C456.1 600.6 459.2 599.2 461.2 596.6 C463.2 594.0 464.0 588.4 465.5 585.9 C467.0 583.4 468.1 583.1 469.8 582.3 C471.5 581.5 473.5 581.9 475.0 581.6 C476.5 581.3 477.2 581.3 478.6 580.6 C480.0 579.9 481.4 578.1 482.9 577.7 C484.4 577.3 485.7 579.8 487.2 578.4 C488.7 577.0 489.7 572.5 491.5 569.8 C493.3 567.1 495.4 564.3 497.3 562.7 C499.2 561.1 500.8 562.5 502.3 560.5 C503.8 558.5 504.0 553.3 505.9 551.2 C507.8 549.1 511.4 550.3 513.1 548.3 C514.9 546.3 514.1 542.2 515.9 539.7 C517.6 537.2 520.8 535.9 523.1 534.0 C525.4 532.1 527.0 529.4 528.8 528.9 C530.6 528.4 531.8 532.6 533.2 531.1 C534.6 529.6 535.2 522.8 536.7 520.3 C538.2 517.8 540.4 517.5 541.8 516.7 C543.2 515.9 543.6 518.5 544.6 516.0 C545.6 513.5 546.2 505.3 547.5 502.4 C548.8 499.5 550.0 500.0 551.8 499.5 C553.6 499.0 555.3 501.8 557.6 499.5 C559.9 497.2 562.7 489.2 564.7 486.6 C566.7 484.0 566.9 484.5 569.0 484.4 C571.1 484.3 574.8 486.8 576.9 485.9 C579.0 485.0 579.9 481.7 581.2 479.4 C582.5 477.1 582.7 474.7 584.1 472.9 C585.5 471.1 587.1 470.0 589.1 469.0 C591.1 468.0 593.2 467.0 595.7 467.0 C598.2 467.0 601.3 469.8 603.1 469.0 C604.9 468.2 605.0 463.5 606.0 462.4 C607.0 461.3 607.7 462.5 608.9 462.9 C610.1 463.3 611.4 463.4 613.0 464.5 C614.6 465.6 615.7 468.2 618.0 469.0 C620.3 469.8 624.0 469.6 626.2 469.0 C628.4 468.4 628.7 465.6 630.7 465.3 C632.7 465.0 635.5 466.5 637.7 467.4 C639.9 468.3 641.9 470.7 643.5 470.3 C645.1 469.9 645.6 466.3 646.8 465.3 C648.0 464.3 648.9 465.3 650.1 464.5 C651.3 463.7 652.2 461.1 653.4 460.8 C654.6 460.5 655.4 462.5 656.7 462.9 C658.0 463.3 659.1 462.5 660.8 462.9 C662.5 463.2 664.9 465.1 666.6 464.9 C668.3 464.7 669.4 462.3 670.7 462.0 C672.0 461.7 672.7 464.6 674.0 463.3 C675.3 462.0 676.9 456.3 678.1 454.6 C679.3 452.9 679.3 453.1 681.0 453.4 C682.7 453.7 685.8 456.2 688.0 456.3 C690.2 456.4 692.2 454.1 693.8 453.8 C695.4 453.5 695.9 455.9 697.1 454.6 C698.3 453.3 698.6 447.7 700.4 446.4 C702.2 445.1 705.6 447.7 707.4 447.4 C709.2 447.1 708.4 444.5 710.7 444.9 C713.0 445.3 718.4 449.8 720.6 449.5 C722.8 449.2 721.0 444.1 723.5 443.3 C726.0 442.5 732.1 443.9 734.6 444.9 C737.1 445.9 736.3 448.5 737.9 449.0 C739.5 449.5 741.8 448.9 743.7 447.8 C745.6 446.7 747.0 443.7 748.6 442.9 C750.2 442.1 750.9 442.3 752.8 443.3 C754.7 444.3 757.1 447.7 759.3 448.6 C761.5 449.5 763.2 448.8 765.1 448.2 C767.0 447.6 768.5 446.7 770.1 444.9 C771.7 443.1 772.8 439.9 774.2 437.9 C775.6 435.9 776.4 433.8 778.3 433.4 C780.2 433.0 783.0 435.3 784.9 435.4 C786.8 435.5 787.3 433.7 789.0 434.2 C790.7 434.7 793.2 437.9 794.8 438.3 C796.4 438.7 796.2 435.8 798.1 436.3 C800.0 436.8 803.2 440.9 805.5 441.2 C807.8 441.5 809.7 438.0 811.3 437.9 C812.9 437.8 813.2 441.0 814.6 440.8 C816.0 440.6 816.9 437.7 819.1 436.5 C821.3 435.3 824.5 434.5 827.4 434.0 C830.3 433.5 833.7 433.2 835.6 433.6 C837.5 434.0 837.4 437.0 838.5 436.5 C839.6 436.0 840.1 430.7 841.8 430.7 C843.5 430.7 846.3 435.1 848.0 436.5 C849.7 437.9 850.0 438.2 851.3 438.6 C852.6 439.0 854.2 439.6 855.4 439.0 C856.6 438.4 856.3 435.8 857.9 434.9 C859.5 434.0 862.6 434.9 864.5 434.0 C866.4 433.1 866.7 429.8 868.6 429.5 C870.5 429.2 872.2 432.5 875.2 432.4 C878.2 432.3 883.6 430.3 885.9 428.7 C888.2 427.1 886.4 424.9 888.4 423.3 C890.4 421.7 894.9 419.9 897.4 419.6 C899.9 419.3 899.9 421.1 902.4 421.7 C904.9 422.3 909.1 423.9 911.4 423.3 C913.7 422.7 913.7 419.0 915.6 418.4 C917.5 417.8 920.4 418.4 922.1 419.6 C923.8 420.8 924.2 424.9 925.4 425.0 C926.6 425.1 926.9 420.7 928.7 420.0 C930.5 419.3 933.8 422.1 935.8 421.1 C937.8 420.1 938.1 416.1 939.9 414.5 C941.7 412.9 943.5 411.5 946.1 412.0 C948.7 412.5 952.5 416.5 954.7 417.4 C956.9 418.3 957.1 418.3 958.8 417.4 C960.5 416.5 962.9 413.0 964.6 412.4 C966.3 411.8 967.2 412.6 968.7 413.7 C970.2 414.8 970.4 417.9 972.9 418.6 C975.4 419.3 980.1 418.9 982.7 417.8 C985.3 416.7 986.2 413.3 987.7 412.4 C989.2 411.5 989.4 411.5 991.0 412.4 C992.6 413.3 994.3 417.0 996.8 417.4 C999.2 417.8 1003.0 415.9 1005.0 414.5 C1007.0 413.1 1005.6 410.9 1008.3 409.6 C1011.0 408.3 1018.2 407.7 1020.7 407.1 C1023.2 406.5 1021.7 405.4 1022.7 405.9 C1023.7 406.4 1025.2 410.2 1026.4 410.0 C1027.6 409.8 1028.0 406.0 1029.7 404.6 C1031.4 403.2 1034.4 402.0 1036.3 402.1 C1038.2 402.2 1038.9 404.4 1040.4 405.4 C1041.9 406.4 1043.3 406.9 1045.0 407.7 C1046.7 408.5 1048.5 409.9 1049.9 409.8 C1051.3 409.7 1051.5 407.7 1053.2 407.3 C1054.9 406.9 1057.9 407.1 1059.8 407.7 C1061.7 408.3 1061.7 409.8 1064.0 411.0 C1066.3 412.2 1070.8 414.7 1073.0 414.3 C1075.2 413.9 1075.1 409.8 1076.3 408.9 C1077.5 408.0 1077.8 408.1 1079.6 409.3 C1081.4 410.5 1084.4 415.1 1086.6 415.5 C1088.8 415.9 1090.2 412.2 1092.0 411.4 C1093.8 410.6 1095.3 412.2 1096.9 411.0 C1098.5 409.8 1099.1 406.3 1101.0 404.4 C1102.9 402.5 1105.0 401.3 1107.6 399.9 C1110.2 398.5 1113.2 396.3 1115.9 396.2 C1118.6 396.1 1121.4 400.3 1123.3 399.5 C1125.2 398.7 1124.3 393.0 1126.6 391.6 C1128.9 390.2 1134.0 391.8 1136.5 391.6 C1139.0 391.4 1138.8 389.0 1140.6 390.4 C1142.4 391.8 1145.2 399.4 1146.8 399.5 C1148.4 399.6 1147.8 392.7 1149.7 391.2 C1151.6 389.7 1155.7 391.7 1157.9 390.8 C1160.1 389.9 1160.9 386.8 1162.0 385.9 C1163.1 385.0 1162.6 385.6 1164.1 385.7 C1165.6 385.8 1169.0 387.9 1170.7 386.6 C1172.4 385.3 1172.4 380.0 1174.0 378.3 C1175.6 376.6 1177.6 377.0 1179.8 377.1 C1182.0 377.2 1184.5 377.8 1186.4 378.7 C1188.3 379.6 1189.2 382.5 1190.5 382.4 C1191.8 382.3 1192.1 379.1 1193.8 378.3 C1195.5 377.5 1198.0 376.7 1200.4 377.9 C1202.9 379.1 1206.1 384.3 1207.8 385.3 C1209.5 386.3 1209.1 383.5 1210.3 383.7 C1211.5 383.9 1212.0 387.3 1214.4 386.2 C1216.9 385.1 1221.3 378.2 1224.3 377.5 C1227.3 376.8 1229.4 380.8 1231.7 382.4 C1234.0 384.0 1235.3 387.0 1237.5 386.6 C1239.7 386.2 1242.5 381.0 1244.1 380.4 C1245.7 379.8 1245.2 383.2 1246.5 383.3 C1247.8 383.4 1249.2 381.4 1251.5 381.2 C1253.8 381.0 1257.5 382.8 1259.7 382.4 C1261.9 382.0 1262.5 379.2 1263.8 379.1 C1265.1 379.0 1265.3 381.0 1267.1 381.6 C1268.9 382.2 1272.2 381.8 1274.1 382.4 C1276.0 383.0 1276.9 385.1 1278.2 385.3 C1279.5 385.5 1280.3 383.5 1281.5 383.3 C1282.7 383.1 1283.6 385.7 1285.2 384.1 C1286.8 382.5 1288.8 375.9 1290.6 374.2 C1292.4 372.5 1294.2 373.8 1295.5 374.2 C1296.8 374.6 1296.4 376.0 1298.0 376.3 C1299.6 376.6 1302.4 375.2 1304.6 375.9 C1306.8 376.6 1308.4 379.3 1310.4 380.4 C1312.4 381.5 1313.2 381.4 1316.2 382.0 C1319.2 382.6 1324.5 382.8 1327.7 384.1 C1330.9 385.4 1332.4 390.4 1334.3 389.5 C1336.2 388.6 1337.1 380.7 1338.4 378.7 C1339.7 376.7 1340.4 377.6 1341.7 377.9 C1343.0 378.2 1344.1 380.0 1345.8 380.4 C1347.5 380.8 1349.9 379.6 1351.6 380.0 C1353.3 380.4 1354.4 382.6 1355.7 382.4 C1357.0 382.2 1358.0 381.2 1359.0 379.1 C1360.0 377.0 1359.9 372.7 1361.5 370.5 C1363.1 368.3 1366.3 367.0 1368.1 366.4 C1369.9 365.8 1371.2 367.1 1371.8 367.2" fill="none" stroke="#0c0c0e" stroke-opacity="0.35" stroke-width="7" stroke-linejoin="round" stroke-linecap="round"/>
  <path d="M150.5 821.0 C151.6 821.2 154.9 822.7 156.5 822.0 C158.1 821.3 158.4 818.4 159.6 817.0 C160.8 815.6 162.0 815.3 163.5 813.8 C165.0 812.3 166.5 809.9 168.0 808.5 C169.5 807.1 169.7 806.7 172.0 806.0 C174.3 805.3 178.9 806.1 181.0 804.6 C183.1 803.1 182.9 798.9 184.0 797.7 C185.1 796.5 186.1 797.2 187.3 797.7 C188.5 798.2 189.2 800.1 191.0 800.5 C192.8 800.9 195.1 801.0 197.3 800.0 C199.5 799.0 201.8 798.2 203.5 794.6 C205.2 791.0 206.0 781.8 207.3 779.2 C208.6 776.6 209.2 780.9 211.0 780.0 C212.8 779.1 215.1 776.4 217.3 773.8 C219.5 771.2 221.3 768.2 223.5 765.4 C225.7 762.6 227.8 761.7 229.6 757.7 C231.3 753.7 232.2 745.7 233.5 742.3 C234.8 738.9 235.6 739.4 237.3 738.5 C239.1 737.6 241.8 737.6 243.5 737.0 C245.2 736.4 245.3 736.4 247.2 734.8 C249.1 733.2 252.0 730.0 254.4 727.7 C256.8 725.4 258.5 722.5 260.8 721.9 C263.1 721.3 265.5 724.5 267.3 724.0 C269.1 723.5 269.4 719.7 270.9 719.0 C272.4 718.3 273.8 721.0 275.9 719.8 C278.0 718.6 280.9 713.7 283.0 711.9 C285.1 710.1 286.1 709.3 288.1 709.7 C290.1 710.1 292.1 713.1 294.5 714.0 C296.9 714.9 299.6 716.3 301.7 714.7 C303.8 713.1 305.2 706.6 306.7 704.7 C308.2 702.8 308.8 703.8 310.3 704.0 C311.8 704.2 314.0 706.5 315.4 706.1 C316.8 705.7 317.0 702.7 318.2 701.8 C319.4 700.9 320.9 702.4 322.5 701.1 C324.1 699.8 326.0 697.7 327.6 694.6 C329.2 691.5 330.1 686.7 331.9 683.2 C333.6 679.7 335.9 676.0 337.6 674.5 C339.4 673.0 340.0 675.3 341.9 674.5 C343.8 673.7 346.8 672.1 348.4 670.2 C350.0 668.3 350.1 665.1 351.2 663.8 C352.3 662.5 353.3 662.9 354.8 663.0 C356.3 663.1 358.7 664.3 360.0 664.5 C361.3 664.7 361.1 665.3 362.2 664.1 C363.3 662.9 365.0 660.3 366.5 657.7 C368.0 655.1 369.3 651.6 370.8 649.0 C372.3 646.4 373.1 643.6 375.1 642.6 C377.1 641.6 379.3 643.4 382.3 643.3 C385.3 643.2 390.0 643.7 392.3 641.9 C394.6 640.1 393.7 635.3 395.2 633.2 C396.7 631.1 399.1 631.1 400.9 629.7 C402.6 628.3 403.8 625.8 405.2 625.4 C406.6 625.0 407.0 627.6 408.8 627.5 C410.6 627.4 413.5 626.6 415.3 624.6 C417.1 622.6 417.4 618.0 418.9 616.0 C420.4 614.0 422.3 613.8 423.9 613.2 C425.5 612.6 426.7 612.2 428.2 612.4 C429.7 612.6 431.2 614.7 432.5 614.6 C433.8 614.5 433.9 612.7 435.4 611.7 C436.9 610.7 439.4 610.8 441.1 608.8 C442.9 606.8 444.0 602.0 445.4 600.2 C446.8 598.5 447.5 598.7 449.0 598.8 C450.5 598.9 451.9 601.4 454.0 601.0 C456.1 600.6 459.2 599.2 461.2 596.6 C463.2 594.0 464.0 588.4 465.5 585.9 C467.0 583.4 468.1 583.1 469.8 582.3 C471.5 581.5 473.5 581.9 475.0 581.6 C476.5 581.3 477.2 581.3 478.6 580.6 C480.0 579.9 481.4 578.1 482.9 577.7 C484.4 577.3 485.7 579.8 487.2 578.4 C488.7 577.0 489.7 572.5 491.5 569.8 C493.3 567.1 495.4 564.3 497.3 562.7 C499.2 561.1 500.8 562.5 502.3 560.5 C503.8 558.5 504.0 553.3 505.9 551.2 C507.8 549.1 511.4 550.3 513.1 548.3 C514.9 546.3 514.1 542.2 515.9 539.7 C517.6 537.2 520.8 535.9 523.1 534.0 C525.4 532.1 527.0 529.4 528.8 528.9 C530.6 528.4 531.8 532.6 533.2 531.1 C534.6 529.6 535.2 522.8 536.7 520.3 C538.2 517.8 540.4 517.5 541.8 516.7 C543.2 515.9 543.6 518.5 544.6 516.0 C545.6 513.5 546.2 505.3 547.5 502.4 C548.8 499.5 550.0 500.0 551.8 499.5 C553.6 499.0 555.3 501.8 557.6 499.5 C559.9 497.2 562.7 489.2 564.7 486.6 C566.7 484.0 566.9 484.5 569.0 484.4 C571.1 484.3 574.8 486.8 576.9 485.9 C579.0 485.0 579.9 481.7 581.2 479.4 C582.5 477.1 582.7 474.7 584.1 472.9 C585.5 471.1 587.1 470.0 589.1 469.0 C591.1 468.0 593.2 467.0 595.7 467.0 C598.2 467.0 601.3 469.8 603.1 469.0 C604.9 468.2 605.0 463.5 606.0 462.4 C607.0 461.3 607.7 462.5 608.9 462.9 C610.1 463.3 611.4 463.4 613.0 464.5 C614.6 465.6 615.7 468.2 618.0 469.0 C620.3 469.8 624.0 469.6 626.2 469.0 C628.4 468.4 628.7 465.6 630.7 465.3 C632.7 465.0 635.5 466.5 637.7 467.4 C639.9 468.3 641.9 470.7 643.5 470.3 C645.1 469.9 645.6 466.3 646.8 465.3 C648.0 464.3 648.9 465.3 650.1 464.5 C651.3 463.7 652.2 461.1 653.4 460.8 C654.6 460.5 655.4 462.5 656.7 462.9 C658.0 463.3 659.1 462.5 660.8 462.9 C662.5 463.2 664.9 465.1 666.6 464.9 C668.3 464.7 669.4 462.3 670.7 462.0 C672.0 461.7 672.7 464.6 674.0 463.3 C675.3 462.0 676.9 456.3 678.1 454.6 C679.3 452.9 679.3 453.1 681.0 453.4 C682.7 453.7 685.8 456.2 688.0 456.3 C690.2 456.4 692.2 454.1 693.8 453.8 C695.4 453.5 695.9 455.9 697.1 454.6 C698.3 453.3 698.6 447.7 700.4 446.4 C702.2 445.1 705.6 447.7 707.4 447.4 C709.2 447.1 708.4 444.5 710.7 444.9 C713.0 445.3 718.4 449.8 720.6 449.5 C722.8 449.2 721.0 444.1 723.5 443.3 C726.0 442.5 732.1 443.9 734.6 444.9 C737.1 445.9 736.3 448.5 737.9 449.0 C739.5 449.5 741.8 448.9 743.7 447.8 C745.6 446.7 747.0 443.7 748.6 442.9 C750.2 442.1 750.9 442.3 752.8 443.3 C754.7 444.3 757.1 447.7 759.3 448.6 C761.5 449.5 763.2 448.8 765.1 448.2 C767.0 447.6 768.5 446.7 770.1 444.9 C771.7 443.1 772.8 439.9 774.2 437.9 C775.6 435.9 776.4 433.8 778.3 433.4 C780.2 433.0 783.0 435.3 784.9 435.4 C786.8 435.5 787.3 433.7 789.0 434.2 C790.7 434.7 793.2 437.9 794.8 438.3 C796.4 438.7 796.2 435.8 798.1 436.3 C800.0 436.8 803.2 440.9 805.5 441.2 C807.8 441.5 809.7 438.0 811.3 437.9 C812.9 437.8 813.2 441.0 814.6 440.8 C816.0 440.6 816.9 437.7 819.1 436.5 C821.3 435.3 824.5 434.5 827.4 434.0 C830.3 433.5 833.7 433.2 835.6 433.6 C837.5 434.0 837.4 437.0 838.5 436.5 C839.6 436.0 840.1 430.7 841.8 430.7 C843.5 430.7 846.3 435.1 848.0 436.5 C849.7 437.9 850.0 438.2 851.3 438.6 C852.6 439.0 854.2 439.6 855.4 439.0 C856.6 438.4 856.3 435.8 857.9 434.9 C859.5 434.0 862.6 434.9 864.5 434.0 C866.4 433.1 866.7 429.8 868.6 429.5 C870.5 429.2 872.2 432.5 875.2 432.4 C878.2 432.3 883.6 430.3 885.9 428.7 C888.2 427.1 886.4 424.9 888.4 423.3 C890.4 421.7 894.9 419.9 897.4 419.6 C899.9 419.3 899.9 421.1 902.4 421.7 C904.9 422.3 909.1 423.9 911.4 423.3 C913.7 422.7 913.7 419.0 915.6 418.4 C917.5 417.8 920.4 418.4 922.1 419.6 C923.8 420.8 924.2 424.9 925.4 425.0 C926.6 425.1 926.9 420.7 928.7 420.0 C930.5 419.3 933.8 422.1 935.8 421.1 C937.8 420.1 938.1 416.1 939.9 414.5 C941.7 412.9 943.5 411.5 946.1 412.0 C948.7 412.5 952.5 416.5 954.7 417.4 C956.9 418.3 957.1 418.3 958.8 417.4 C960.5 416.5 962.9 413.0 964.6 412.4 C966.3 411.8 967.2 412.6 968.7 413.7 C970.2 414.8 970.4 417.9 972.9 418.6 C975.4 419.3 980.1 418.9 982.7 417.8 C985.3 416.7 986.2 413.3 987.7 412.4 C989.2 411.5 989.4 411.5 991.0 412.4 C992.6 413.3 994.3 417.0 996.8 417.4 C999.2 417.8 1003.0 415.9 1005.0 414.5 C1007.0 413.1 1005.6 410.9 1008.3 409.6 C1011.0 408.3 1018.2 407.7 1020.7 407.1 C1023.2 406.5 1021.7 405.4 1022.7 405.9 C1023.7 406.4 1025.2 410.2 1026.4 410.0 C1027.6 409.8 1028.0 406.0 1029.7 404.6 C1031.4 403.2 1034.4 402.0 1036.3 402.1 C1038.2 402.2 1038.9 404.4 1040.4 405.4 C1041.9 406.4 1043.3 406.9 1045.0 407.7 C1046.7 408.5 1048.5 409.9 1049.9 409.8 C1051.3 409.7 1051.5 407.7 1053.2 407.3 C1054.9 406.9 1057.9 407.1 1059.8 407.7 C1061.7 408.3 1061.7 409.8 1064.0 411.0 C1066.3 412.2 1070.8 414.7 1073.0 414.3 C1075.2 413.9 1075.1 409.8 1076.3 408.9 C1077.5 408.0 1077.8 408.1 1079.6 409.3 C1081.4 410.5 1084.4 415.1 1086.6 415.5 C1088.8 415.9 1090.2 412.2 1092.0 411.4 C1093.8 410.6 1095.3 412.2 1096.9 411.0 C1098.5 409.8 1099.1 406.3 1101.0 404.4 C1102.9 402.5 1105.0 401.3 1107.6 399.9 C1110.2 398.5 1113.2 396.3 1115.9 396.2 C1118.6 396.1 1121.4 400.3 1123.3 399.5 C1125.2 398.7 1124.3 393.0 1126.6 391.6 C1128.9 390.2 1134.0 391.8 1136.5 391.6 C1139.0 391.4 1138.8 389.0 1140.6 390.4 C1142.4 391.8 1145.2 399.4 1146.8 399.5 C1148.4 399.6 1147.8 392.7 1149.7 391.2 C1151.6 389.7 1155.7 391.7 1157.9 390.8 C1160.1 389.9 1160.9 386.8 1162.0 385.9 C1163.1 385.0 1162.6 385.6 1164.1 385.7 C1165.6 385.8 1169.0 387.9 1170.7 386.6 C1172.4 385.3 1172.4 380.0 1174.0 378.3 C1175.6 376.6 1177.6 377.0 1179.8 377.1 C1182.0 377.2 1184.5 377.8 1186.4 378.7 C1188.3 379.6 1189.2 382.5 1190.5 382.4 C1191.8 382.3 1192.1 379.1 1193.8 378.3 C1195.5 377.5 1198.0 376.7 1200.4 377.9 C1202.9 379.1 1206.1 384.3 1207.8 385.3 C1209.5 386.3 1209.1 383.5 1210.3 383.7 C1211.5 383.9 1212.0 387.3 1214.4 386.2 C1216.9 385.1 1221.3 378.2 1224.3 377.5 C1227.3 376.8 1229.4 380.8 1231.7 382.4 C1234.0 384.0 1235.3 387.0 1237.5 386.6 C1239.7 386.2 1242.5 381.0 1244.1 380.4 C1245.7 379.8 1245.2 383.2 1246.5 383.3 C1247.8 383.4 1249.2 381.4 1251.5 381.2 C1253.8 381.0 1257.5 382.8 1259.7 382.4 C1261.9 382.0 1262.5 379.2 1263.8 379.1 C1265.1 379.0 1265.3 381.0 1267.1 381.6 C1268.9 382.2 1272.2 381.8 1274.1 382.4 C1276.0 383.0 1276.9 385.1 1278.2 385.3 C1279.5 385.5 1280.3 383.5 1281.5 383.3 C1282.7 383.1 1283.6 385.7 1285.2 384.1 C1286.8 382.5 1288.8 375.9 1290.6 374.2 C1292.4 372.5 1294.2 373.8 1295.5 374.2 C1296.8 374.6 1296.4 376.0 1298.0 376.3 C1299.6 376.6 1302.4 375.2 1304.6 375.9 C1306.8 376.6 1308.4 379.3 1310.4 380.4 C1312.4 381.5 1313.2 381.4 1316.2 382.0 C1319.2 382.6 1324.5 382.8 1327.7 384.1 C1330.9 385.4 1332.4 390.4 1334.3 389.5 C1336.2 388.6 1337.1 380.7 1338.4 378.7 C1339.7 376.7 1340.4 377.6 1341.7 377.9 C1343.0 378.2 1344.1 380.0 1345.8 380.4 C1347.5 380.8 1349.9 379.6 1351.6 380.0 C1353.3 380.4 1354.4 382.6 1355.7 382.4 C1357.0 382.2 1358.0 381.2 1359.0 379.1 C1360.0 377.0 1359.9 372.7 1361.5 370.5 C1363.1 368.3 1366.3 367.0 1368.1 366.4 C1369.9 365.8 1371.2 367.1 1371.8 367.2" fill="none" stroke="#e62a9e" stroke-width="3.4" stroke-linejoin="round" stroke-linecap="round"/>
  </g>
  <g stroke="#7d7d80" stroke-width="1.5">
    <line x1="150.5" y1="344" x2="150.5" y2="873"/>
    <line x1="144" y1="437" x2="150" y2="437"/>
    <line x1="144" y1="535.5" x2="150" y2="535.5"/>
    <line x1="144" y1="634" x2="150" y2="634"/>
    <line x1="144" y1="732.5" x2="150" y2="732.5"/>
    <line x1="144" y1="831" x2="150" y2="831"/>
    <line x1="362" y1="867" x2="362" y2="873.5"/>
    <line x1="573" y1="867" x2="573" y2="873"/>
    <line x1="784.5" y1="867" x2="784.5" y2="873"/>
    <line x1="996" y1="867" x2="996" y2="873"/>
    <line x1="1207.5" y1="867" x2="1207.5" y2="873"/>
  </g>
  <g font-family="Liberation Sans" font-size="19" fill="#8f8f92" text-anchor="end">
    <text x="125" y="443.5">$180K</text>
    <text x="125" y="542">$170K</text>
    <text x="125" y="640.5">$160K</text>
    <text x="125" y="739">$150K</text>
    <text x="125" y="837.5">$140K</text>
  </g>
  <g font-family="Liberation Sans" font-size="18.5" fill="#8f8f92" text-anchor="middle" letter-spacing="0.2">
    <text x="150.5" y="905.5">Oct 17</text>
    <text x="362" y="905.5">Dec 19</text>
    <text x="573" y="905.5">Feb 20</text>
    <text x="785" y="905.5">Apr 24</text>
    <text x="996" y="905.5">Jun 26</text>
    <text x="1207.5" y="905.5">Aug 28</text>
  </g>
  <g fill="#b9a2b3">
    <rect x="1077" y="827.5" width="14" height="2.2"/>
    <rect x="1077" y="831.5" width="14" height="2.2"/>
    <path d="M1077 835.5 H1091 V843.5 L1084 839.5 L1077 843.5 Z"/>
  </g>
  <text x="1103.5" y="842" font-family="Liberation Sans" font-size="17" fill="#b9a2b3" stroke="#b9a2b3" stroke-width="0.35" letter-spacing="0.92">MAXREAD.SUBSTACK.COM</text>
  <line x1="150" y1="867.3" x2="1372" y2="867.3" stroke="#a39ca1" stroke-width="1.3"/>
</svg>
</body></html>
